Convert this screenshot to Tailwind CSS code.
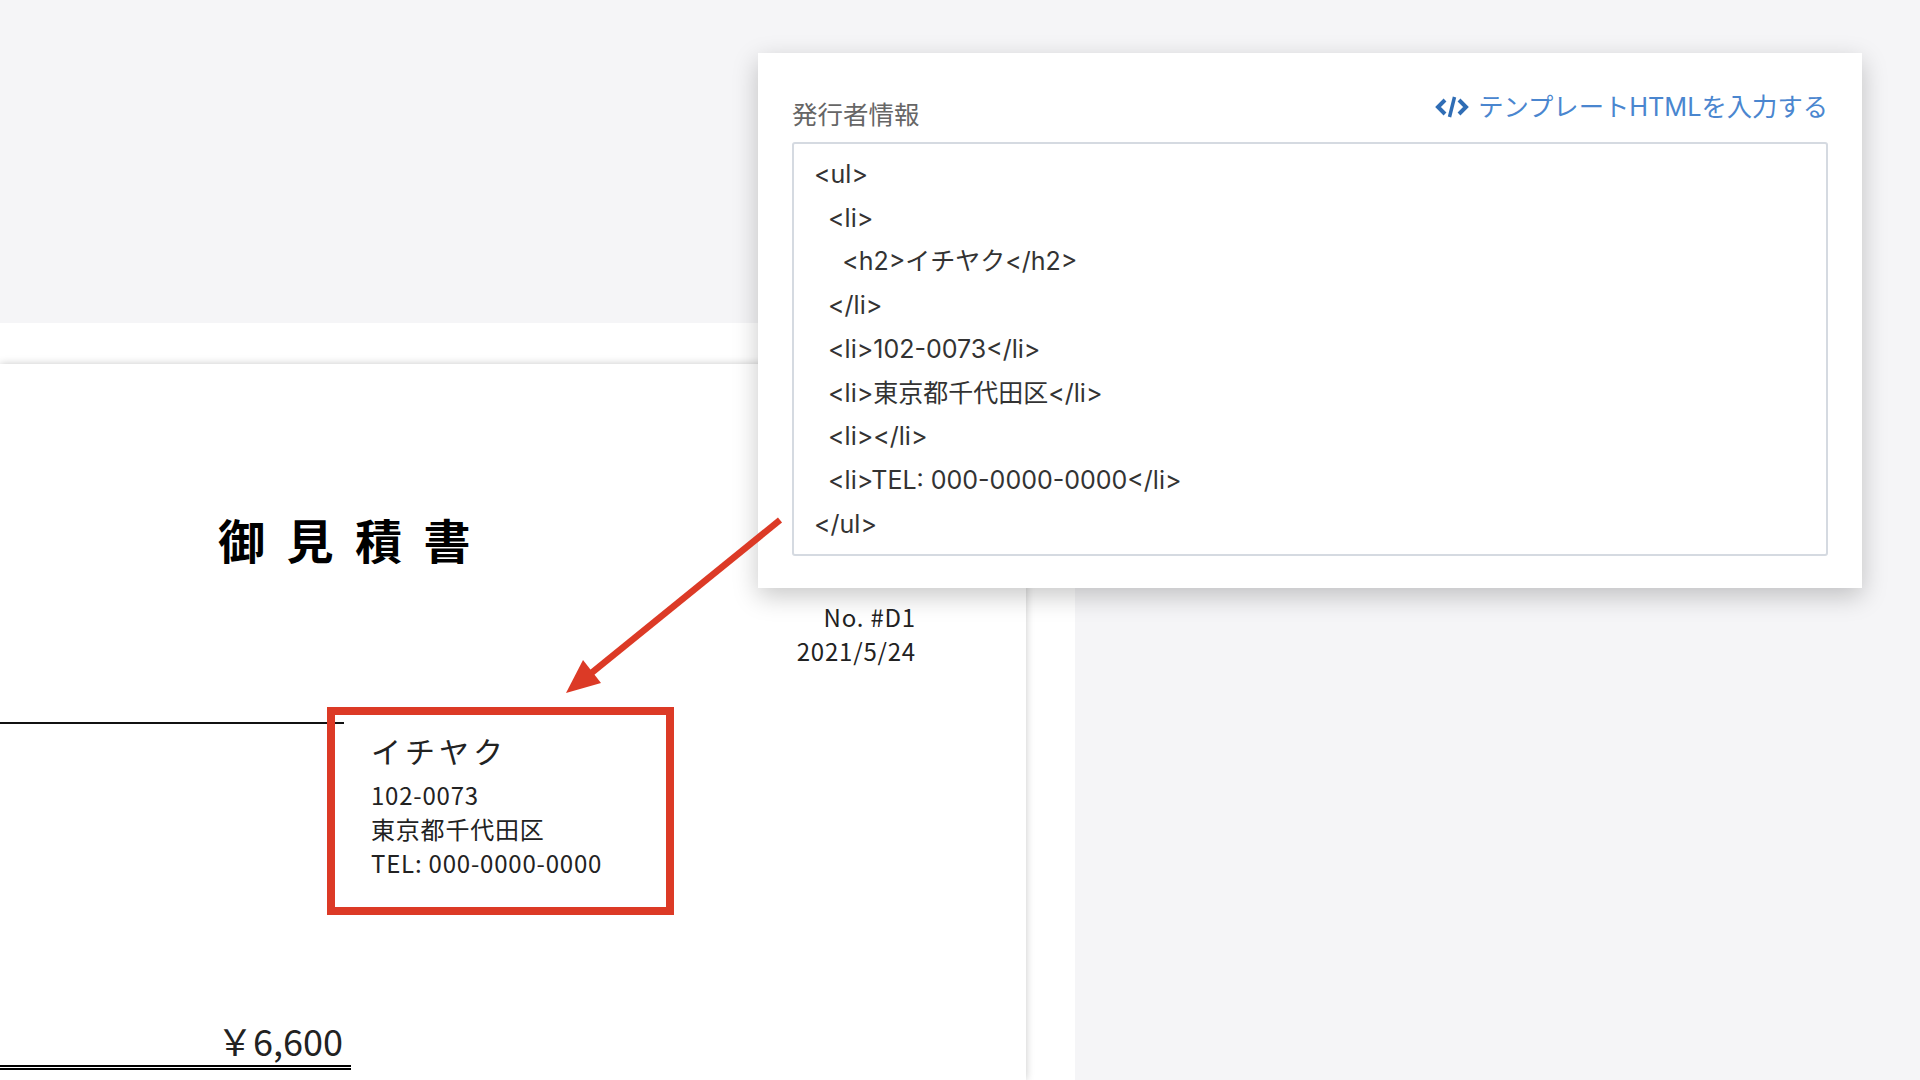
<!DOCTYPE html>
<html lang="ja">
  <head>
    <meta charset="UTF-8" />
    <title>発行者情報</title>
    <script src="https://cdn.jsdelivr.net/npm/@tailwindcss/browser@4"></script>
  </head>
  <body>
    <div class="relative h-[1080px] w-[1920px] overflow-hidden bg-[#f5f5f7] font-['Noto_Sans_CJK_JP',sans-serif]">
      <div class="h-[323px]"></div>

      <!-- document preview -->
      <div class="h-[757px] w-[1075px] bg-white pt-[41px]">
        <div class="h-full w-[1026px] bg-white text-[#222] shadow-[0_0_8px_rgba(0,0,0,0.22)]">
          <h1 class="pl-[218px] pt-[145px] text-[47px] leading-[60px] font-bold tracking-[21.5px] text-black">御見積書</h1>

          <div class="mt-[31px] w-[916px] text-right text-[24px] leading-[34px] tracking-[0.8px]">
            <p>No. #D1</p>
            <p>2021/5/24</p>
          </div>

          <div class="mt-[39px] flex items-start">
            <div class="-mr-[17px] h-[17px] w-[344px] border-b-2 border-[#111]"></div>
            <div class="relative h-[208px] w-[347px] border-[8px] border-[#dc3a26] pl-[36px] pt-[15px]">
              <h2 class="text-[30px] leading-[40px] tracking-[4px]">イチヤク</h2>
              <ul class="mt-[8px] text-[24px] leading-[34px] tracking-[0.8px]">
                <li>102-0073</li>
                <li>東京都千代田区</li>
                <li>TEL: 000-0000-0000</li>
              </ul>
            </div>
          </div>

          <div class="mt-[100px] w-[351px] border-b-[5px] border-double border-black pr-[8px] text-right text-[36px] leading-[50px]">￥6,600</div>
        </div>
      </div>

      <!-- issuer form card -->
      <div class="absolute left-[758px] top-[53px] h-[535px] w-[1104px] bg-white px-[34px] shadow-[0_8px_24px_rgba(0,0,0,0.22)]">
        <div class="flex h-[89px] items-end justify-between">
          <label class="mb-[11px] text-[25.5px] leading-[36px] text-[#666]">発行者情報</label>
          <a class="mb-[17px] flex items-center gap-[9px] font-['Inter','Noto_Sans_CJK_JP',sans-serif] text-[25.3px] leading-[36px] text-[#4a86cf]">
            <svg width="34" height="24" viewBox="0 0 34 24" fill="none" stroke="#2f6db5" stroke-width="4">
              <path d="M10 5 L3 12 L10 19" />
              <path d="M24 5 L31 12 L24 19" />
              <path d="M19.5 2 L14.5 22" stroke-width="3.5" />
            </svg>
            <span>テンプレートHTMLを入力する</span>
          </a>
        </div>
        <pre class="h-[414px] rounded-[3px] border-2 border-[#d5dae1] pl-[20px] pt-[9px] font-['Inter','Noto_Sans_CJK_JP',sans-serif] text-[25px] leading-[43.7px] text-[#333]">&lt;ul&gt;
  &lt;li&gt;
    &lt;h2&gt;イチヤク&lt;/h2&gt;
  &lt;/li&gt;
  &lt;li&gt;102-0073&lt;/li&gt;
  &lt;li&gt;東京都千代田区&lt;/li&gt;
  &lt;li&gt;&lt;/li&gt;
  &lt;li&gt;TEL: 000-0000-0000&lt;/li&gt;
&lt;/ul&gt;</pre>
      </div>

      <!-- arrow from the form to the issuer block -->
      <svg class="absolute left-[560px] top-[510px]" width="230" height="190" viewBox="0 0 230 190">
        <line x1="220" y1="10" x2="24" y2="169" stroke="#dc3a26" stroke-width="6.5" />
        <polygon points="6,183 23,150 41,173" fill="#dc3a26" />
      </svg>
    </div>
  </body>
</html>
